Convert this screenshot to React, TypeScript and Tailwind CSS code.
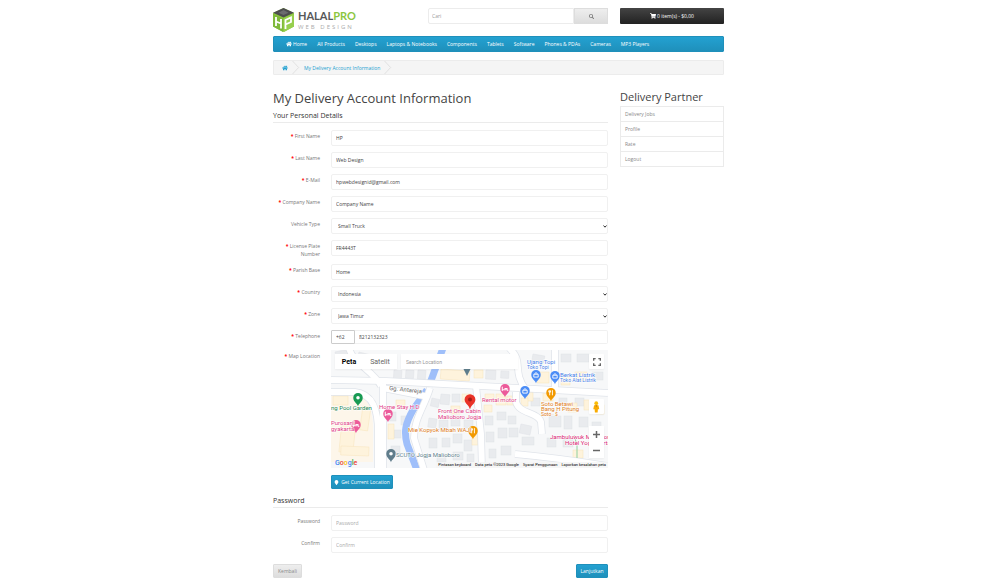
import { useState } from "react";
import type { ReactNode } from "react";
import { FaHome, FaShoppingCart, FaSearch, FaMapMarker } from "react-icons/fa";

const NAV = [
  "All Products",
  "Desktops",
  "Laptops & Notebooks",
  "Components",
  "Tablets",
  "Software",
  "Phones & PDAs",
  "Cameras",
  "MP3 Players",
];

const SIDE_LINKS = ["Delivery Jobs", "Profile", "Rate", "Logout"];

const INPUT =
  "h-4 w-full rounded-[2px] border border-[#f0f0f0] bg-white px-1 text-[5px] text-[#444] outline-none placeholder:text-[#aaa] focus:border-[#23a1d1]";
const BLUE_BTN =
  "flex items-center justify-center gap-[2px] rounded-[1px] border border-[#1f90bb] bg-linear-to-b from-[#23a1d1] to-[#1f90bb] text-[5px] text-white";

function Row({
  id,
  label,
  required,
  tall,
  children,
}: {
  id: string;
  label: string;
  required?: boolean;
  tall?: boolean;
  children: ReactNode;
}) {
  return (
    <div className={`grid grid-cols-[47px_minmax(0,1fr)] items-start gap-x-[11px] ${tall ? "min-h-[17px]" : ""}`}>
      <label htmlFor={id} className="pt-[2px] text-right text-[5px] leading-[8px] text-[#777]">
        {required && <span className="font-bold text-[#f00]">* </span>}
        {label}
      </label>
      {children}
    </div>
  );
}

function TextRow({
  id,
  label,
  value,
  placeholder,
  type = "text",
  required,
  tall,
}: {
  id: string;
  label: string;
  value?: string;
  placeholder?: string;
  type?: string;
  required?: boolean;
  tall?: boolean;
}) {
  return (
    <Row id={id} label={label} required={required} tall={tall}>
      <input id={id} type={type} defaultValue={value} placeholder={placeholder} className={INPUT} />
    </Row>
  );
}

function SelectRow({ id, label, options, required }: { id: string; label: string; options: string[]; required?: boolean }) {
  return (
    <Row id={id} label={label} required={required}>
      <div className="relative">
        <select
          id={id}
          className="block h-4 w-full appearance-none rounded-[2px] border border-[#f0f0f0] bg-white px-[6px] text-[5px] text-[#444] outline-none"
        >
          {options.map((o) => (
            <option key={o}>{o}</option>
          ))}
        </select>
        <svg viewBox="0 0 8 6" className="pointer-events-none absolute top-[7px] right-[1px] w-[4px]">
          <path d="M1 1l3 3.4L7 1" fill="none" stroke="#222" strokeWidth="1.9" />
        </svg>
      </div>
    </Row>
  );
}

function Logo() {
  return (
    <a href="#" className="flex items-center gap-1">
      <svg viewBox="0 0 42 48" className="h-6 w-[21px]">
        <path d="M21 0L42 10v27L21 48 0 37V10z" fill="#8cc63f" />
        <path d="M21 0L42 9.5 21 19 0 9.5z" fill="#4d4d4f" />
        <path d="M21 4l10 5.5L21 14l-10-4.500z" fill="#6b6b6e" />
        <path d="M0 12l20 8.500V48L0 37z" fill="#7fb93a" />
        <path d="M22 20.500L42 12v25L22 48z" fill="#97cf4e" />
        <path d="M6 18v18M16 22v19M6 27l10 4M25 42V24l11-5v9l-11 5" fill="none" stroke="#fff" strokeWidth="3.600" />
      </svg>
      <span className="flex flex-col">
        <span className="font-[Lato,sans-serif] text-[11px] leading-[14px] font-bold text-[#58585a]">
          HALAL<span className="text-[#8cc63f]">PRO</span>
        </span>
        <span className="text-[6px] leading-[8px] tracking-[2px] text-[#aaa]">WEB DESIGN</span>
      </span>
    </a>
  );
}

// x, y, w, h, angle
const GRAY: number[][] = [
  [4, 2, 12, 8, -12], [28, 2, 14, 7, 14], [63, 20, 8, 9, 4], [75, 20, 8, 8, 4], [87, 20, 8, 9, 4],
  [58, 62, 7, 9, 0], [70, 66, 6, 9, 0], [63, 80, 7, 8, 0], [60, 96, 9, 7, 0],
  [101, 48, 8, 8, 12], [110, 44, 9, 10, 5], [121, 44, 8, 8, 0], [98, 68, 8, 9, 8], [108, 70, 9, 10, 0],
  [120, 66, 9, 10, 0], [133, 70, 9, 8, 0], [98, 88, 8, 10, 0], [111, 88, 8, 9, 0], [122, 84, 9, 9, 0],
  [133, 90, 8, 11, 0], [106, 104, 9, 8, 0], [122, 102, 10, 8, 0], [136, 104, 7, 8, 0],
  [154, 66, 8, 9, 0], [166, 62, 9, 8, 0], [177, 66, 8, 8, 0], [155, 82, 8, 10, 0], [167, 78, 9, 10, 0],
  [178, 78, 9, 9, 0], [190, 74, 11, 9, 12], [191, 87, 12, 8, 0], [158, 99, 7, 9, 0], [170, 96, 10, 9, 0],
  [200, 48, 9, 8, 0], [218, 66, 12, 11, 0], [233, 66, 8, 13, 0], [216, 88, 9, 9, 0], [232, 88, 10, 9, 0],
  [248, 67, 9, 10, 0], [244, 48, 9, 8, 0], [228, 48, 8, 8, 0], [155, 20, 10, 9, 3], [170, 21, 8, 7, 3],
  [202, 4, 12, 7, 10], [230, 4, 10, 8, 0], [246, 4, 12, 8, 0], [261, 22, 11, 8, 0], [261, 72, 9, 7, 0],
];
const CREAM: number[][] = [
  [2, 46, 15, 9, 0], [32, 56, 8, 24, 8], [11, 72, 14, 30, 6], [10, 96, 28, 9, 2], [65, 50, 9, 8, 0],
  [57, 74, 6, 15, 0], [110, 19, 29, 10, 4], [143, 20, 9, 8, 0], [131, 44, 9, 8, 0], [141, 84, 6, 11, 0],
  [154, 44, 9, 8, 0], [165, 44, 10, 11, 0], [176, 46, 8, 9, 0], [153, 55, 8, 7, 0], [196, 42, 6, 9, 0],
  [190, 48, 7, 8, 0], [206, 22, 12, 11, 0], [230, 26, 9, 9, 0], [244, 22, 12, 9, 0], [212, 43, 10, 8, 0],
  [237, 53, 9, 9, 0], [253, 50, 11, 10, 0], [120, 56, 9, 8, 0], [242, 100, 10, 8, 0], [265, 55, 8, 9, 0],
];
const RIVER = ["M112 -2L98 36", "M96 40L82 60C74 74 73 82 76 94L86 120"];
const ROADS = [
  "M0 30L55 31L150 36L277 43",
  "M18 -2C22 14 42 20 50 36",
  "M-2 42H24C42 44 47 60 47 82V120",
  "M52 34V118",
  "M52 38L98 47",
  "M99 38C94 56 83 68 83 88L93 120",
  "M145 36L150 84L151 120",
  "M178 -2C194 12 180 20 195 40",
  "M185 42V52C188 64 207 62 210 72L211 84",
  "M224 -2V40",
  "M184 104C206 106 240 110 277 116",
];

function Pin({ x, y, color, kind }: { x: number; y: number; color: string; kind: "dot" | "bed" | "food" | "bag" }) {
  return (
    <g transform={`translate(${x} ${y}) scale(1.1)`}>
      <path d="M0 6.500C-.6 4-4.300 2.600-4.300-1.200a4.300 4.300 0 0 1 8.600 0C4.300 2.600.6 4 0 6.500z" fill={color} />
      {kind === "dot" && <circle cy="-1.200" r="1.600" fill="#fff" />}
      {kind === "bed" && <path d="M-2.500-3v4M-2.500-.2h5V1M-.5-1.300h2.800" stroke="#fff" strokeWidth=".9" fill="none" />}
      {kind === "food" && <path d="M-1.200-3.500V1.200M1.300 1.200v-4.700M-2-3.200v1.500h1.600v-1.500" stroke="#fff" strokeWidth=".8" fill="none" />}
      {kind === "bag" && <path d="M-2-1.600h4V1h-4zM-1-1.600c0-2 2-2 2 0" stroke="#fff" strokeWidth=".8" fill="none" />}
    </g>
  );
}

function MapDrawing() {
  return (
    <svg
      viewBox="0 0 277 118"
      preserveAspectRatio="xMidYMid slice"
      className="absolute inset-0 size-full font-[Roboto,sans-serif] text-[6px]"
    >
      <rect width="277" height="118" fill="#f7f8f9" />
      <path d="M0 44h22c14 0 20 16 20 34v34H0z" fill="#fdf6ea" />
      {GRAY.map(([x, y, w, h, a], i) => (
        <rect key={i} x={x} y={y} width={w} height={h} transform={`rotate(${a} ${x} ${y})`} fill="#e9ebee" stroke="#dfe2e6" strokeWidth=".5" />
      ))}
      {CREAM.map(([x, y, w, h, a], i) => (
        <rect key={i} x={x} y={y} width={w} height={h} transform={`rotate(${a} ${x} ${y})`} fill="#fef3dc" stroke="#f7e4bb" strokeWidth=".5" />
      ))}
      {RIVER.map((d) => (
        <path key={d} d={d} fill="none" stroke="#9fbffa" strokeWidth="7" />
      ))}
      {ROADS.map((d) => (
        <path key={d} d={d} fill="none" stroke="#e0e4ea" strokeWidth="7.500" />
      ))}
      {ROADS.map((d) => (
        <path key={d} d={d} fill="none" stroke="#fff" strokeWidth="6" />
      ))}
      <path d="M243 85l3 10v13" fill="none" stroke="#8fd0a0" strokeWidth="1" />
      <path d="M132 18h8l-4 8z" fill="#5f7e8c" />

      <Pin x={27} y={49} color="#189a53" kind="dot" />
      <Pin x={57} y={65} color="#ec5a9a" kind="bed" />
      <Pin x={25} y={76} color="#ec5a9a" kind="bed" />
      <Pin x={60} y={105} color="#607d8b" kind="dot" />
      <Pin x={174} y={40} color="#ec5a9a" kind="bed" />
      <Pin x={142} y={82} color="#f29900" kind="food" />
      <Pin x={205} y={26} color="#4c8df6" kind="bag" />
      <Pin x={224} y={27} color="#4c8df6" kind="bag" />
      <Pin x={194} y={42} color="#4c8df6" kind="bag" />
      <Pin x={220} y={44} color="#f29900" kind="food" />
      <g transform="translate(139 51)">
        <path d="M0 9C-.6 4-5.400 3-5.400-1.400a5.400 5.400 0 0 1 10.800 0C5.400 3 .6 4 0 9z" fill="#ea3328" />
        <circle cy="-1.400" r="2" fill="#a51d17" />
      </g>

      <g stroke="#fff" strokeWidth="1" paintOrder="stroke">
        <text x="58" y="40" fill="#666" transform="rotate(6 58 40)">Gg. Antareja</text>
        <text x="0" y="60" fill="#238550">ng Pool Garden</text>
        <text x="48" y="59" fill="#e03a85">Home Stay H.D</text>
        <text x="0" y="75" fill="#e03a85">Purosani</text>
        <text x="0" y="81" fill="#e03a85">gyakarta</text>
        <text x="65" y="107" fill="#607d8b">SCUTO Jogja Malioboro</text>
        <text x="107" y="63" fill="#e03a85">Front One Cabin</text>
        <text x="107" y="69" fill="#e03a85">Malioboro Jogja</text>
        <text x="77" y="82" fill="#dd7b17">Mie Kopyok Mbah WAJI</text>
        <text x="151" y="52" fill="#e03a85">Rental motor</text>
        <text x="196" y="14" fill="#4680e8">Ujang Topi</text>
        <text x="196" y="19" fill="#4680e8" fontSize="5">Toko Topi</text>
        <text x="229" y="27" fill="#4680e8">Berkat Listrik</text>
        <text x="229" y="32" fill="#4680e8" fontSize="5">Toko Alat Listrik</text>
        <text x="210" y="56" fill="#dd7b17">Soto Betawi</text>
        <text x="210" y="61" fill="#dd7b17">Bang H Pitung</text>
        <text x="210" y="66" fill="#dd7b17" fontSize="5">Soto · $</text>
        <text x="219" y="89" fill="#d81b72">Jambuluwuk Malioboro</text>
        <text x="234" y="95" fill="#d81b72">Hotel Yogyakarta</text>
      </g>
    </svg>
  );
}

function LocationMap() {
  const [satellite, setSatellite] = useState(false);
  return (
    <div className="relative flex h-[118px] flex-col overflow-hidden font-[Roboto,sans-serif]">
      <MapDrawing />
      <div className="relative flex items-start justify-between p-1">
        <div className="flex min-w-0 flex-1 gap-1 pr-[71px]">
          <div className="flex h-[15px] shrink-0 bg-white text-[7px] shadow-xs">
            <button type="button" onClick={() => setSatellite(false)} className={`w-[28px] ${satellite ? "text-[#666]" : "font-bold text-black"}`}>
              Peta
            </button>
            <button type="button" onClick={() => setSatellite(true)} className={`w-[34px] ${satellite ? "font-bold text-black" : "text-[#666]"}`}>
              Satelit
            </button>
          </div>
          <input
            id="map-location"
            placeholder="Search Location"
            className="h-[15px] w-full min-w-0 bg-white px-[5px] text-[5px] shadow-xs outline-none placeholder:text-[#999]"
          />
        </div>
        <button type="button" aria-label="Fullscreen" className="flex size-[15px] items-center justify-center rounded-[1px] bg-white shadow-xs">
          <svg viewBox="0 0 18 18" className="size-[8px]">
            <path d="M1.500 6V1.500H6M12 1.500h4.500V6M16.500 12v4.500H12M6 16.500H1.500V12" fill="none" stroke="#666" strokeWidth="3" />
          </svg>
        </button>
      </div>
      <div className="relative mt-[26px] flex flex-col items-end gap-3 px-1">
        <button type="button" aria-label="Street View" className="flex size-[15px] items-center justify-center rounded-[1px] bg-white shadow-xs">
          <svg viewBox="0 0 12 22" className="h-[12px]">
            <circle cx="6" cy="4" r="3.500" fill="#fbbc04" />
            <path d="M2 8h8l1.500 7H9l-.5 6h-5L3 15H.5z" fill="#f9ab00" />
            <path d="M4 8l2 3 2-3z" fill="#c77800" />
          </svg>
        </button>
        <div className="flex w-[15px] flex-col bg-white shadow-xs">
          {["M2 9h14M9 2v14", "M2 9h14"].map((d, i) => (
            <button key={d} type="button" aria-label={i ? "Zoom out" : "Zoom in"} className="flex h-[16px] items-center justify-center">
              <svg viewBox="0 0 18 18" className="size-[9px]">
                <path d={d} fill="none" stroke="#666" strokeWidth="3" />
              </svg>
            </button>
          ))}
        </div>
      </div>
      <div className="relative mt-auto flex items-end justify-between">
        <span className="pl-1 text-[7px] leading-[9px] font-medium">
          <span className="text-[#4285f4]">G</span>
          <span className="text-[#ea4335]">o</span>
          <span className="text-[#fbbc05]">o</span>
          <span className="text-[#4285f4]">g</span>
          <span className="text-[#34a853]">l</span>
          <span className="text-[#ea4335]">e</span>
        </span>
        <div className="flex gap-1 bg-[#f5f5f5]/80 px-[2px] text-[4px] leading-[6px] text-black">
          <button type="button">Pintasan keyboard</button>
          <span>Data peta ©2023 Google</span>
          <a href="#">Syarat Penggunaan</a>
          <a href="#">Laporkan kesalahan peta</a>
        </div>
      </div>
    </div>
  );
}

function Chevron() {
  return (
    <svg viewBox="0 0 8 15" className="mx-[4px] h-[13px] w-[8px]">
      <path d="M0 0l7 7.500L0 15" fill="none" stroke="#ddd" strokeWidth="1" />
    </svg>
  );
}

export default function App() {
  return (
    <div className="bg-white pr-[3px] font-['Open_Sans',sans-serif] text-[5px] leading-[8px] text-[#666]">
      <div className="mx-auto max-w-[451px] pt-2">
        <header className="grid grid-cols-[minmax(0,1fr)_180px_104px] items-start gap-x-3">
          <Logo />
          <form className="flex" onSubmit={(e) => e.preventDefault()}>
            <input
              aria-label="Cari"
              placeholder="Cari"
              className="h-4 min-w-0 flex-1 rounded-l-[2px] border border-[#ececec] px-[3px] text-[5px] outline-none placeholder:text-[#999]"
            />
            <button
              type="submit"
              aria-label="Search"
              className="flex h-4 w-[34px] items-center justify-center border border-[#ddd] bg-linear-to-b from-[#eee] to-[#ddd] text-[#777]"
            >
              <FaSearch size={5} />
            </button>
          </form>
          <button
            type="button"
            className="flex h-4 items-center justify-center gap-[1px] rounded-[1px] bg-linear-to-b from-[#444] to-[#222] text-[5px] text-white"
          >
            <FaShoppingCart size={6} /> 0 item(s) - $0,00
          </button>
        </header>

        <nav className="mt-1 flex h-4 items-center gap-[10px] rounded-[1px] border border-[#1f90bb] bg-linear-to-b from-[#23a1d1] to-[#1f90bb] px-3 text-white">
          <a href="#" className="flex items-center gap-[1px]">
            <FaHome size={6} /> Home
          </a>
          {NAV.map((n) => (
            <a key={n} href="#">
              {n}
            </a>
          ))}
        </nav>

        <ol className="mt-2 flex h-[15px] items-center rounded-[1px] border border-[#ececec] bg-[#f5f5f5] pl-2 text-[#23a1d1]">
          <li className="flex items-center">
            <a href="#" aria-label="Home">
              <FaHome size={6} />
            </a>
            <Chevron />
          </li>
          <li className="flex items-center">
            <a href="#">My Delivery Account Information</a>
            <Chevron />
          </li>
        </ol>

        <div className="mt-[15px] grid grid-cols-[minmax(0,1fr)_104px] gap-x-3">
          <main>
            <h1 className="text-[13px] leading-4 text-[#444]">My Delivery Account Information</h1>
            <form onSubmit={(e) => e.preventDefault()}>
              <h2 className="mt-[5px] mb-[7px] border-b border-[#ebebeb] pb-[1px] text-[7px] leading-[10px] text-[#333]">
                Your Personal Details
              </h2>
              <div className="flex flex-col gap-[6px]">
                <TextRow id="firstname" label="First Name" value="HP" required />
                <TextRow id="lastname" label="Last Name" value="Web Design" required />
                <TextRow id="email" label="E-Mail" type="email" value="hpwebdesignid@gmail.com" required />
                <TextRow id="company" label="Company Name" value="Company Name" required />
                <SelectRow id="vehicle" label="Vehicle Type" options={["Small Truck", "Van", "Motorcycle"]} />
                <TextRow id="plate" label="License Plate Number" value="FR4443T" required tall />
                <TextRow id="parish" label="Parish Base" value="Home" required />
                <SelectRow id="country" label="Country" options={["Indonesia", "Malaysia"]} required />
                <SelectRow id="zone" label="Zone" options={["Jawa Timur", "Jawa Tengah"]} required />
                <Row id="telephone" label="Telephone" required>
                  <div className="flex">
                    <input
                      aria-label="Country code"
                      defaultValue="+62"
                      className="h-[14px] w-6 rounded-l-[1px] border border-[#ccc] px-1 text-[5px] text-[#444] outline-none"
                    />
                    <input
                      id="telephone"
                      type="tel"
                      defaultValue="8212132323"
                      className="h-[14px] min-w-0 flex-1 rounded-r-[2px] border border-l-0 border-[#f0f0f0] px-1 text-[5px] text-[#444] outline-none"
                    />
                  </div>
                </Row>
                <Row id="map-location" label="Map Location" required>
                  <div>
                    <LocationMap />
                    <button type="button" className={`${BLUE_BTN} mt-[7px] h-[14px] w-[62px]`}>
                      <FaMapMarker size={5} /> Get Current Location
                    </button>
                  </div>
                </Row>
              </div>
              <h2 className="mt-[7px] mb-[7px] border-b border-[#ebebeb] pb-[1px] text-[7px] leading-[10px] text-[#333]">Password</h2>
              <div className="flex flex-col gap-[6px]">
                <TextRow id="password" label="Password" type="password" placeholder="Password" />
                <TextRow id="confirm" label="Confirm" type="password" placeholder="Confirm" />
              </div>
              <div className="mt-[11px] flex justify-between">
                <a
                  href="#"
                  className="flex h-[14px] w-[29px] items-center justify-center rounded-[1px] border border-[#ddd] bg-linear-to-b from-[#eee] to-[#ddd] text-[#888]"
                >
                  Kembali
                </a>
                <button type="submit" className={`${BLUE_BTN} h-[14px] w-8`}>
                  Lanjutkan
                </button>
              </div>
            </form>
          </main>

          <aside>
            <h3 className="text-[11px] leading-[14px] text-[#444]">Delivery Partner</h3>
            <ul className="mt-[2px] divide-y divide-[#ebebeb] border border-[#ebebeb] text-[#888]">
              {SIDE_LINKS.map((l) => (
                <li key={l}>
                  <a href="#" className="block px-1 py-[3px]">
                    {l}
                  </a>
                </li>
              ))}
            </ul>
          </aside>
        </div>
      </div>
    </div>
  );
}
